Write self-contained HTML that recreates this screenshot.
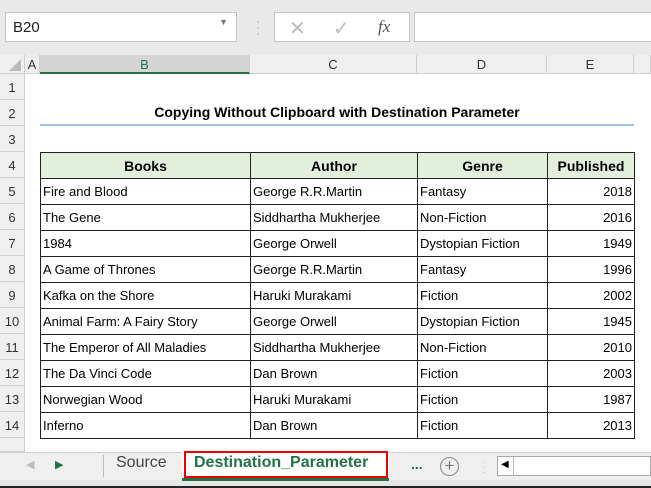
<!DOCTYPE html>
<html><head><style>
*{margin:0;padding:0;box-sizing:border-box}
body{width:651px;height:488px;overflow:hidden;background:#fff;font-family:"Liberation Sans",Calibri,sans-serif;position:relative}
.abs{position:absolute}
.top{left:0;top:0;width:651px;height:55px;background:#e9e9e9}
.nb{left:5px;top:12px;height:30px;background:#fff;border:1px solid #c6c6c6;font-size:15px;padding:6px 0 0 7px;color:#222}
.fx{top:12px;height:30px;background:#fff;border:1px solid #c6c6c6}
.colh{top:55px;height:19px;background:#efefef;border-right:1px solid #cfcfcf;border-bottom:1px solid #cfcfcf;font-size:13px;text-align:center;line-height:19px;color:#333}
.rowh{left:0;width:25px;height:26px;background:#efefef;border-bottom:1px solid #cfcfcf;border-right:1px solid #cfcfcf;font-size:13px;text-align:center;line-height:28px;color:#333}
table{position:absolute;left:40px;top:152px;border-collapse:collapse;font-size:13px;table-layout:fixed}
td{border:1px solid #222;height:26px;padding:0 2px;white-space:nowrap}
th{border:1px solid #222;height:26px;background:#e2efda;font-size:14px}
</style></head><body>
<div class="abs top"></div>
<div class="abs nb" style="width:232px">B20<span style="position:absolute;right:8px;top:4px;font-size:9px;color:#777">▼</span></div>
<div class="abs" style="left:256px;top:18px;color:#aaa;font-size:12px;line-height:6px">·<br>·<br>·</div>
<div class="abs fx" style="left:274px;width:136px"><span class="abs" style="left:14px;top:3px;font-size:20px;color:#bbb">✕</span><span class="abs" style="left:58px;top:3px;font-size:20px;color:#bbb">✓</span><span class="abs" style="left:103px;top:4px;font-size:17px;font-style:italic;font-family:'Liberation Serif',serif;color:#555">fx</span></div>
<div class="abs fx" style="left:414px;width:240px"></div>
<div class="abs colh" style="left:0;width:25px"><span style="position:absolute;right:3px;bottom:2px;border-left:12px solid transparent;border-bottom:12px solid #bbb"></span></div>
<div class="abs colh" style="left:25px;width:15px">A</div>
<div class="abs colh" style="left:40px;width:210px;background:#d4d4d4;border-bottom:2px solid #217346;color:#217346">B</div>
<div class="abs colh" style="left:250px;width:167px">C</div>
<div class="abs colh" style="left:417px;width:130px">D</div>
<div class="abs colh" style="left:547px;width:87px">E</div>
<div class="abs colh" style="left:634px;width:17px"></div>
<div class="abs" style="left:0;top:74px">
<div class="rowh" style="position:relative">1</div><div class="rowh" style="position:relative">2</div><div class="rowh" style="position:relative">3</div><div class="rowh" style="position:relative">4</div><div class="rowh" style="position:relative">5</div><div class="rowh" style="position:relative">6</div><div class="rowh" style="position:relative">7</div><div class="rowh" style="position:relative">8</div><div class="rowh" style="position:relative">9</div><div class="rowh" style="position:relative">10</div><div class="rowh" style="position:relative">11</div><div class="rowh" style="position:relative">12</div><div class="rowh" style="position:relative">13</div><div class="rowh" style="position:relative">14</div><div class="rowh" style="position:relative;height:14px"></div>
</div>
<div class="abs" style="left:40px;top:104px;width:594px;text-align:center;font-weight:bold;font-size:14px">Copying Without Clipboard with Destination Parameter</div>
<div class="abs" style="left:40px;top:124px;width:594px;height:2px;background:#9dc3e6"></div>
<table>
<colgroup><col style="width:210px"><col style="width:167px"><col style="width:130px"><col style="width:87px"></colgroup>
<tr><th>Books</th><th>Author</th><th>Genre</th><th>Published</th></tr>
<tr><td>Fire and Blood</td><td>George R.R.Martin</td><td>Fantasy</td><td align="right">2018</td></tr>
<tr><td>The Gene</td><td>Siddhartha Mukherjee</td><td>Non-Fiction</td><td align="right">2016</td></tr>
<tr><td>1984</td><td>George Orwell</td><td>Dystopian Fiction</td><td align="right">1949</td></tr>
<tr><td>A Game of Thrones</td><td>George R.R.Martin</td><td>Fantasy</td><td align="right">1996</td></tr>
<tr><td>Kafka on the Shore</td><td>Haruki Murakami</td><td>Fiction</td><td align="right">2002</td></tr>
<tr><td>Animal Farm: A Fairy Story</td><td>George Orwell</td><td>Dystopian Fiction</td><td align="right">1945</td></tr>
<tr><td>The Emperor of All Maladies</td><td>Siddhartha Mukherjee</td><td>Non-Fiction</td><td align="right">2010</td></tr>
<tr><td>The Da Vinci Code</td><td>Dan Brown</td><td>Fiction</td><td align="right">2003</td></tr>
<tr><td>Norwegian Wood</td><td>Haruki Murakami</td><td>Fiction</td><td align="right">1987</td></tr>
<tr><td>Inferno</td><td>Dan Brown</td><td>Fiction</td><td align="right">2013</td></tr>
</table>
<div class="abs" style="left:0;top:452px;width:651px;height:28px;background:#efefef;border-top:1px solid #d0d0d0"></div>
<div class="abs" style="left:0;top:480px;width:651px;height:8px;background:#e6e6e6;border-bottom:2px solid #222"></div>
<div class="abs" style="left:26px;top:458px;font-size:11px;color:#bbb">◀</div>
<div class="abs" style="left:55px;top:458px;font-size:11px;color:#217346">▶</div>
<div class="abs" style="left:103px;top:455px;width:1px;height:22px;background:#bbb"></div>
<div class="abs" style="left:116px;top:454px;font-size:16px;color:#444">Source</div>
<div class="abs" style="left:182px;top:451px;width:207px;height:30px;background:#fff;border-bottom:3px solid #217346"></div>
<div class="abs" style="left:184px;top:451px;width:204px;height:27px;border:2px solid #e00"></div>
<div class="abs" style="left:194px;top:454px;font-size:16px;font-weight:bold;color:#217346">Destination_Parameter</div>
<div class="abs" style="left:411px;top:456px;font-size:14px;font-weight:bold;color:#217346">...</div>
<div class="abs" style="left:440px;top:457px;width:19px;height:19px;border:1.5px solid #888;border-radius:50%;text-align:center;line-height:16px;color:#777;font-size:17px">+</div>
<div class="abs" style="left:482px;top:460px;color:#bbb;font-size:10px;line-height:5px">·<br>·<br>·</div>
<div class="abs" style="left:497px;top:456px;width:154px;height:20px;background:#fff;border:1px solid #aaa"><span style="position:absolute;left:3px;top:2px;font-size:10px">◀</span><span style="position:absolute;left:15px;top:0;width:1px;height:18px;background:#bbb"></span></div>
</body></html>
